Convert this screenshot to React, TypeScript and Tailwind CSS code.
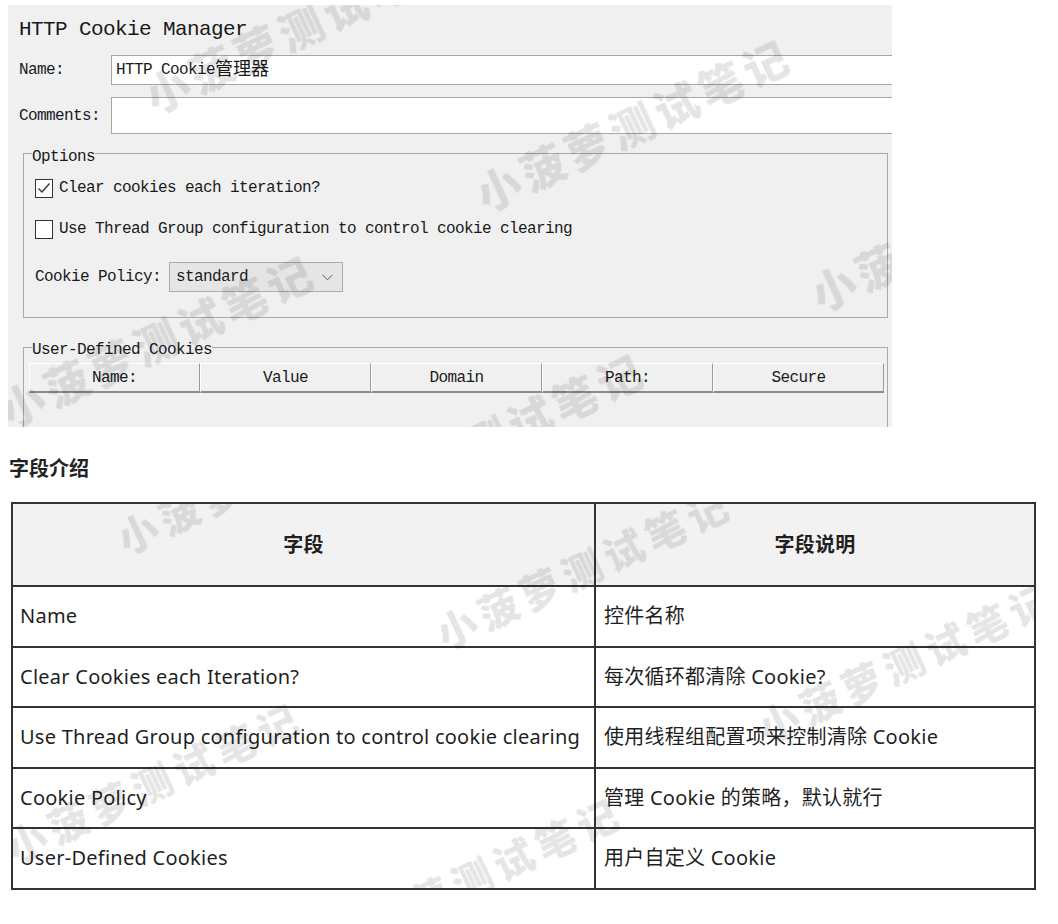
import React from 'react';

// Swing-style panel text: mono, pulled in slightly so glyphs sit at 9px / 12px pitch
const MONO = "font-['Liberation_Mono','Noto_Sans_CJK_SC',monospace] tracking-[-0.6px]";
const SANS = "font-['Noto_Sans','Noto_Sans_CJK_SC',sans-serif]";

const WM_TEXT = '小菠萝测试笔记';

function Watermark({ className }: { className: string }) {
  return (
    <div
      className={`pointer-events-none absolute origin-left rotate-[-25deg] select-none whitespace-nowrap font-['Noto_Sans_CJK_SC',sans-serif] font-black text-black/[0.1] blur-[0.5px] ${className}`}
    >
      {WM_TEXT}
    </div>
  );
}

function CheckBox({ checked }: { checked?: boolean }) {
  return (
    <div className="flex h-[19px] w-[18px] shrink-0 items-center justify-center border border-[#333] bg-white">
      {checked && (
        <svg width="14" height="14" viewBox="0 0 14 14" fill="none">
          <path d="M1.5 7.5 L5 11 L12.5 2.5" stroke="#333" strokeWidth="1.3" />
        </svg>
      )}
    </div>
  );
}

const headerCols = ['Name:', 'Value', 'Domain', 'Path:', 'Secure'];

const fields: [string, string][] = [
  ['Name', '控件名称'],
  ['Clear Cookies each Iteration?', '每次循环都清除 Cookie?'],
  ['Use Thread Group configuration to control cookie clearing', '使用线程组配置项来控制清除 Cookie'],
  ['Cookie Policy', '管理 Cookie 的策略，默认就行'],
  ['User-Defined Cookies', '用户自定义 Cookie'],
];

function CookieManagerPanel() {
  return (
    <div className={`relative ml-[8px] mt-[5px] h-[422px] w-[884px] overflow-hidden bg-[#f0f0f0] pl-[11px] pt-[13px] text-[#1a1a1a] ${MONO}`}>
      <h1 className="h-[24px] text-[21px] leading-[24px]">HTTP Cookie Manager</h1>

      <div className="mt-[13px] flex h-[30px] items-center text-[16px]">
        <span className="w-[92px] shrink-0">Name:</span>
        <div className="flex h-full w-[800px] shrink-0 items-center border border-[#a6a6a6] bg-white pl-[4px]">
          HTTP Cookie<span className="text-[18px] tracking-normal">管理器</span>
        </div>
      </div>

      <div className="mt-[12px] flex h-[37px] items-center text-[16px]">
        <span className="w-[92px] shrink-0">Comments:</span>
        <div className="h-full w-[800px] shrink-0 border border-[#a6a6a6] bg-white" />
      </div>

      {/* Options */}
      <fieldset className="ml-[4px] mt-[11px] w-[865px] border border-[#a9a9a9] pb-[25px] pl-[8px] text-[16px]">
        <legend className="h-[16px] leading-[16px]">
          <span className="relative top-[4px]">Options</span>
        </legend>
        <div className="pl-[3px]">
          <div className="mt-[16px] flex h-[22px] items-center gap-[6px]">
            <CheckBox checked />
            <span>Clear cookies each iteration?</span>
          </div>
          <div className="mt-[19px] flex h-[22px] items-center gap-[6px]">
            <CheckBox />
            <span>Use Thread Group configuration to control cookie clearing</span>
          </div>
          <div className="mt-[22px] flex h-[30px] items-center">
            <span className="w-[134px] shrink-0">Cookie Policy:</span>
            <div className="flex h-full w-[174px] items-center justify-between border border-[#acacac] bg-[#e5e5e5] pl-[6px] pr-[9px]">
              <span>standard</span>
              <svg width="11" height="7" viewBox="0 0 11 7" fill="none">
                <path d="M0.5 0.8 L5.5 5.8 L10.5 0.8" stroke="#555" strokeWidth="1" />
              </svg>
            </div>
          </div>
        </div>
      </fieldset>

      {/* User-Defined Cookies */}
      <fieldset className="ml-[4px] mt-[21px] h-[150px] w-[865px] border border-[#a9a9a9] pl-[8px] pr-[3px] text-[16px]">
        <legend className="h-[16px] leading-[16px]">
          <span className="relative top-[3px]">User-Defined Cookies</span>
        </legend>
        <div className="ml-[-3px] mt-[8px] flex h-[30px]">
          {headerCols.map((c) => (
            <div
              key={c}
              className="flex flex-1 items-center justify-center border-b-2 border-l border-r border-t border-b-[#8a8a8a] border-l-white border-r-[#9a9a9a] border-t-white"
            >
              {c}
            </div>
          ))}
        </div>
      </fieldset>

      <Watermark className="left-[139px] top-[71px] text-[44px] leading-[44px] tracking-[5px]" />
      <Watermark className="left-[470px] top-[169px] text-[44px] leading-[44px] tracking-[5px]" />
      <Watermark className="left-[805px] top-[269px] text-[44px] leading-[44px] tracking-[5px]" />
      <Watermark className="left-[-6px] top-[385px] text-[44px] leading-[44px] tracking-[5px]" />
      <Watermark className="left-[324px] top-[483px] text-[44px] leading-[44px] tracking-[5px]" />
    </div>
  );
}

function FieldTable() {
  return (
    <div className={`relative ml-[11px] mt-[19px] w-[1025px] overflow-hidden border-2 border-[#333] text-[20px] tracking-[0.25px] text-[#1f1f1f] ${SANS}`}>
      <div className="grid h-[81px] grid-cols-[581px_1fr] bg-[#f2f2f2] font-bold">
        <div className="flex items-center justify-center">字段</div>
        <div className="flex items-center justify-center border-l-2 border-[#333]">字段说明</div>
      </div>
      {fields.map(([name, desc]) => (
        <div key={name} className="grid h-[60.5px] grid-cols-[581px_1fr] border-t-2 border-[#333]">
          <div className="flex items-center pl-[7px]">{name}</div>
          <div className="flex items-center border-l-2 border-[#333] pl-[8px]">{desc}</div>
        </div>
      ))}

      <Watermark className="left-[106px] top-[16px] text-[40px] leading-[40px] tracking-[6px]" />
      <Watermark className="left-[425px] top-[111px] text-[40px] leading-[40px] tracking-[6px]" />
      <Watermark className="left-[747px] top-[205px] text-[40px] leading-[40px] tracking-[6px]" />
      <Watermark className="left-[-5px] top-[325px] text-[40px] leading-[40px] tracking-[6px]" />
      <Watermark className="left-[315px] top-[420px] text-[40px] leading-[40px] tracking-[6px]" />
    </div>
  );
}

export default function App() {
  return (
    <div className="min-h-screen bg-white pb-[30px]">
      <CookieManagerPanel />
      <h2 className={`ml-[9px] mt-[28px] text-[20px] font-bold leading-[28px] text-[#222] ${SANS}`}>字段介绍</h2>
      <FieldTable />
    </div>
  );
}
